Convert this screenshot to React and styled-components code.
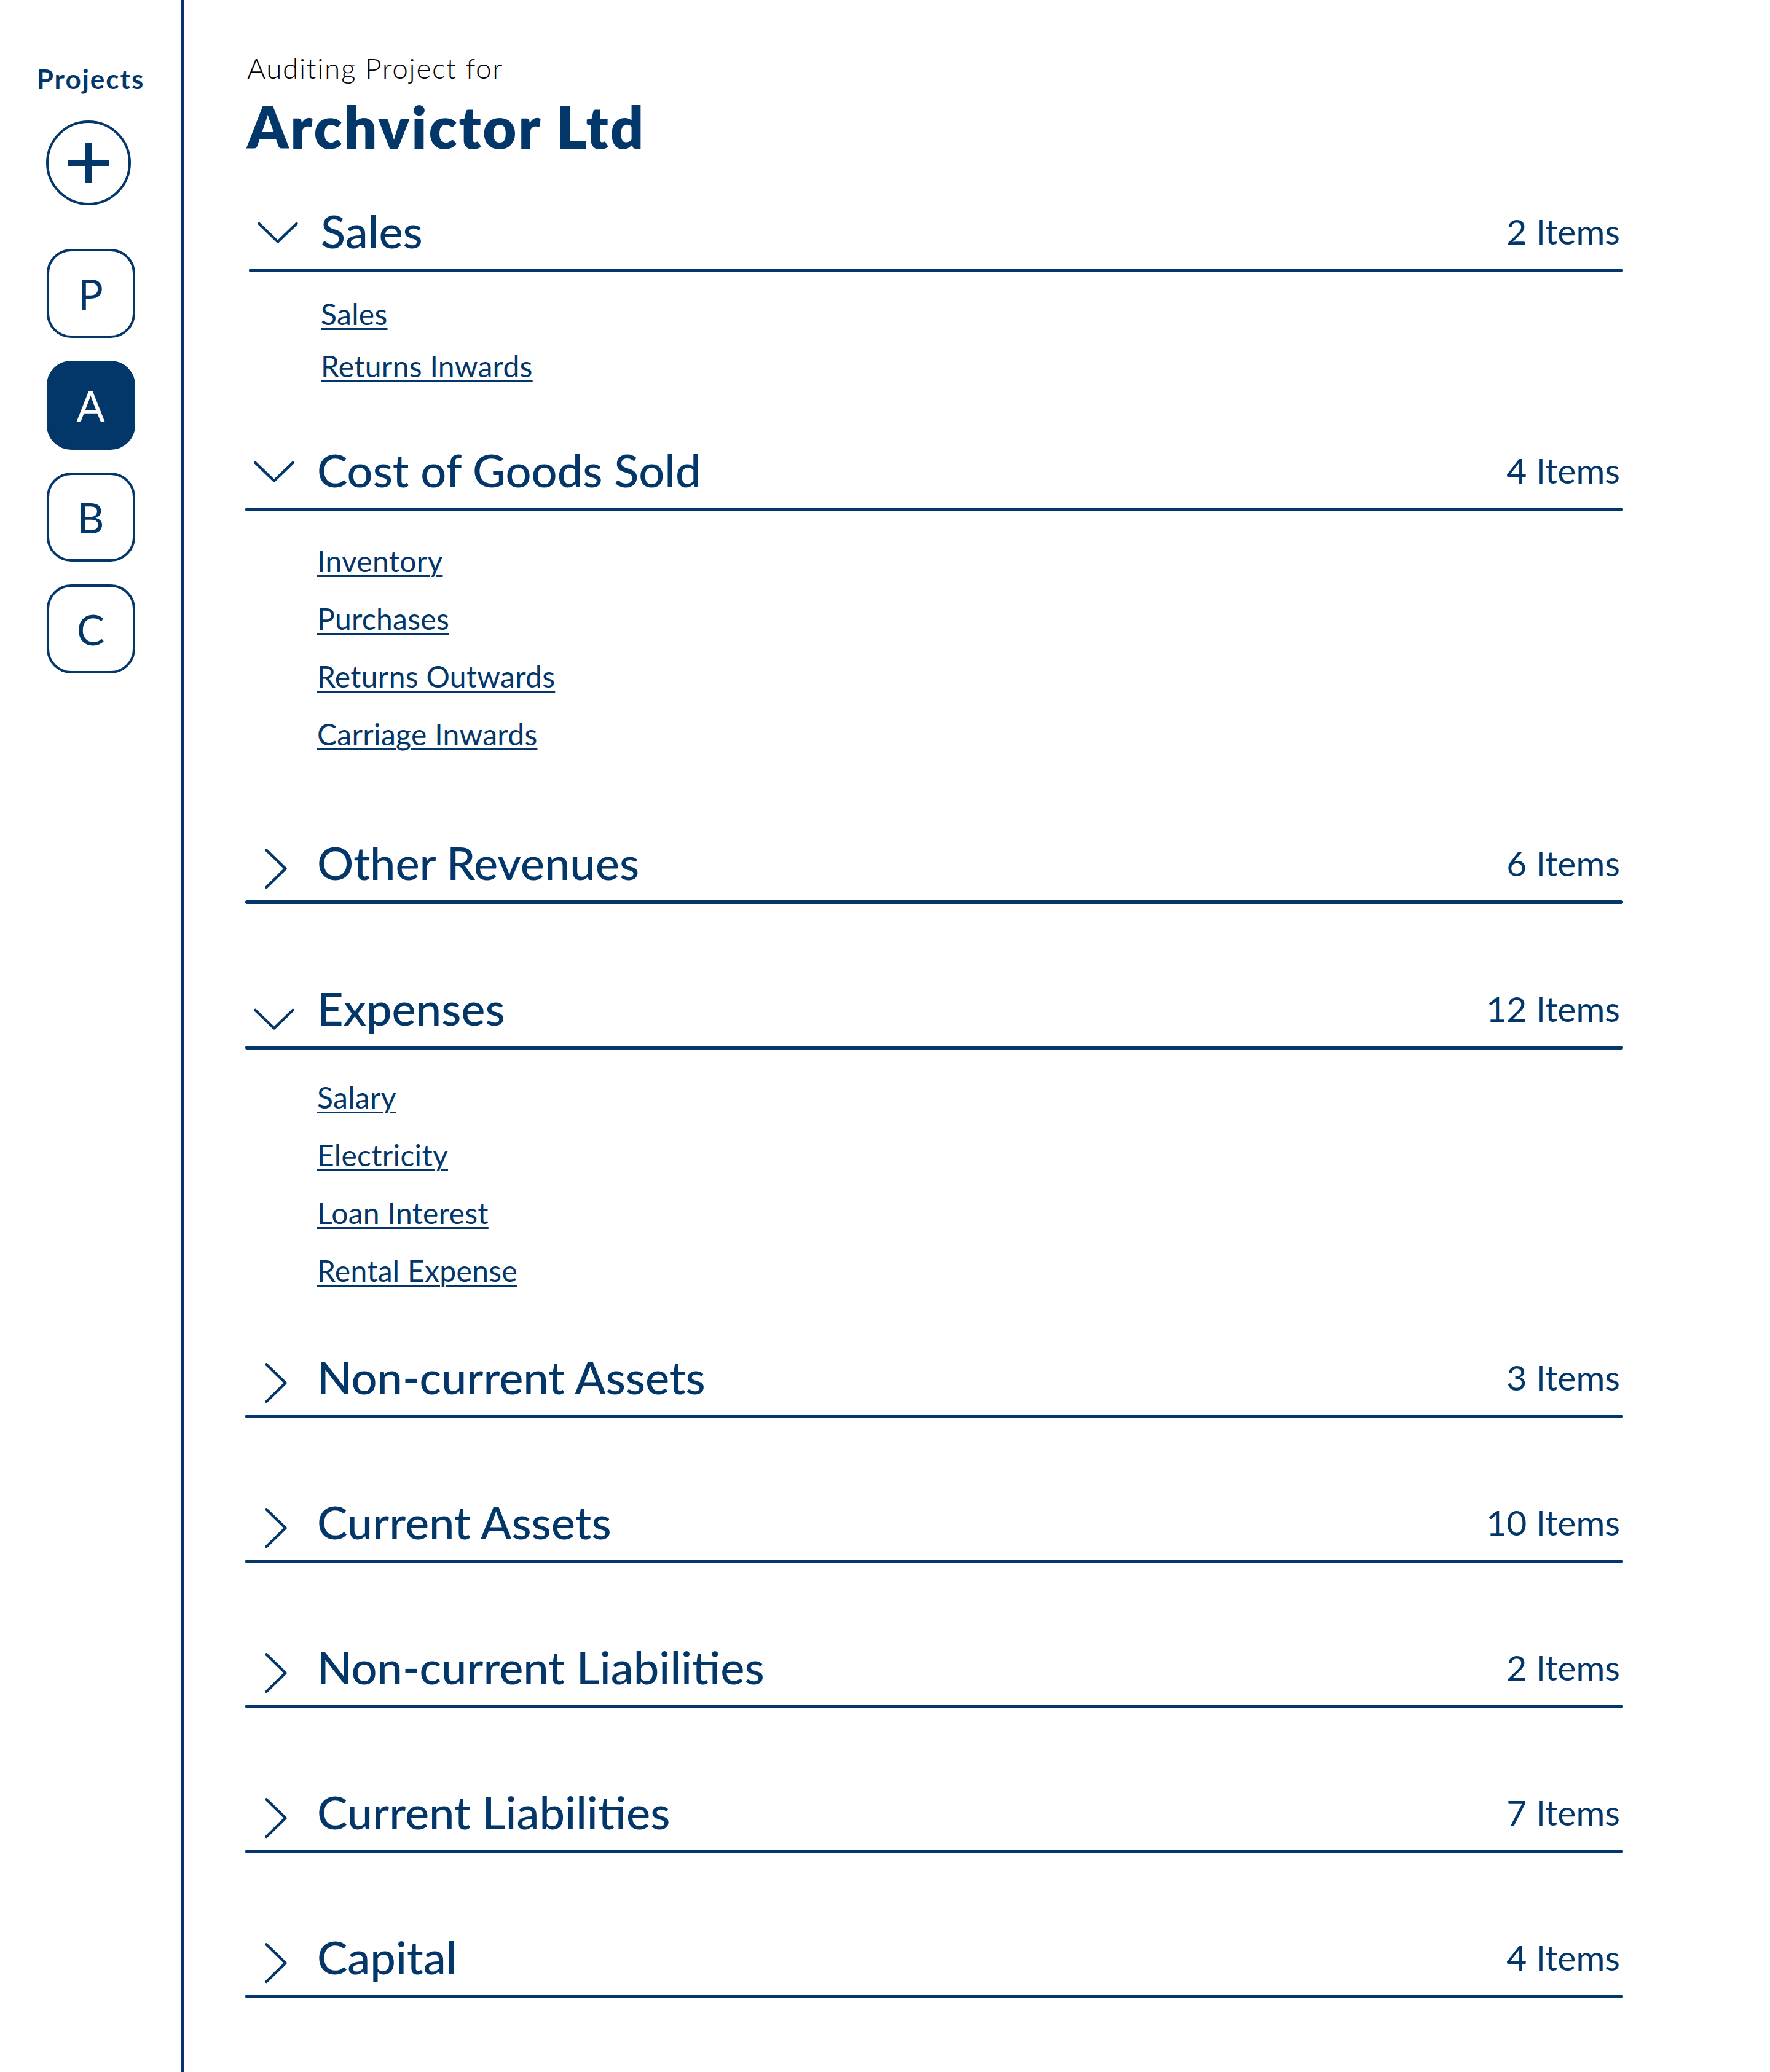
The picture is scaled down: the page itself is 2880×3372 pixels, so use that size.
import React from 'react';
import styled, { createGlobalStyle } from 'styled-components';

const navy = '#03376a';

const GlobalStyle = createGlobalStyle`
	* {
		box-sizing: border-box;
	}
	body {
		margin: 0;
		background: #fff;
		color: ${navy};
		font-family: Lato, "Noto Sans", "Liberation Sans", sans-serif;
	}
`;

const Page = styled.div`
	display: flex;
	min-height: 100vh;
`;

const Sidebar = styled.aside`
	flex-shrink: 0;
	width: 299px;
	border-right: 4px solid ${navy};
	display: flex;
	flex-direction: column;
	align-items: center;
	padding-top: 106px;
`;

const SidebarTitle = styled.h2`
	margin: 0 0 46px;
	font-size: 44px;
	line-height: 1;
	font-weight: 700;
	letter-spacing: 2px;
`;

const AddButton = styled.button`
	width: 138px;
	height: 138px;
	margin: 0 8px 71px 0;
	padding: 0;
	border: 4px solid ${navy};
	border-radius: 50%;
	background: #fff;
	display: flex;
	align-items: center;
	justify-content: center;
	color: ${navy};
`;

const ProjectList = styled.div`
	display: flex;
	flex-direction: column;
	gap: 37px;
`;

const ProjectButton = styled.button`
	width: 144px;
	height: 145px;
	padding: 0;
	border: 4px solid ${navy};
	border-radius: 40px;
	background: ${(p) => (p.$active ? navy : '#fff')};
	color: ${(p) => (p.$active ? '#fff' : navy)};
	font-family: inherit;
	font-size: 68px;
	line-height: 1;
	font-weight: 400;
	display: flex;
	align-items: center;
	justify-content: center;
`;

const Main = styled.main`
	flex: 1;
	padding: 88px 0 0 100px;
`;

const Content = styled.div`
	width: 2242px;
`;

const Kicker = styled.p`
	margin: 0 0 0 3px;
	color: #000;
	font-size: 46px;
	line-height: 1;
	font-weight: 300;
	letter-spacing: 1.6px;
`;

const Company = styled.h1`
	margin: 24px 0 78px 3px;
	font-size: 95px;
	line-height: 1;
	font-weight: 800;
	letter-spacing: 2.8px;
`;

const Section = styled.section`
	margin-left: ${(p) => p.$shift || 0}px;
	margin-bottom: ${(p) => p.$after}px;
`;

const HeaderRow = styled.div`
	display: flex;
	align-items: center;
	height: 90px;
`;

const ChevronBox = styled.div`
	flex-shrink: 0;
	width: 117px;
	padding-left: 13px;
	display: flex;
	align-items: center;
`;

const Title = styled.h3`
	flex: 1;
	margin: 0;
	font-size: 74px;
	line-height: 1;
	font-weight: 500;
`;

const Count = styled.span`
	margin-right: 5px;
	font-size: 57px;
	line-height: 1;
	font-weight: 400;
`;

const Rule = styled.div`
	height: 6px;
	margin-top: 16px;
	border-radius: 3px;
	background: ${navy};
`;

const ItemList = styled.ul`
	list-style: none;
	margin: ${(p) => p.$top}px 0 0;
	padding: 0 0 0 117px;
	display: flex;
	flex-direction: column;
	align-items: flex-start;
	gap: ${(p) => p.$gap}px;
`;

const ItemLink = styled.a`
	display: block;
	color: ${navy};
	font-size: 48px;
	line-height: 1;
	letter-spacing: 0.3px;
	text-decoration: underline;
	text-decoration-thickness: 3px;
	text-underline-offset: 5px;
`;

const Plus = () => (
	<svg width="66" height="66" viewBox="0 0 66 66">
		<rect x="28" y="0" width="10" height="66" fill={navy} />
		<rect x="0" y="28" width="66" height="10" fill={navy} />
	</svg>
);

const Chevron = ({ open, drop = 0 }) => (
	<svg width="70" height="90" viewBox="0 0 70 90">
		<path
			d={
				open
					? `M3.5 ${33 + drop} L34 ${62.5 + drop} L64.5 ${33 + drop}`
					: 'M21.5 24.5 L52.5 54.7 L21.5 85'
			}
			fill="none"
			stroke={navy}
			strokeWidth="4.5"
			strokeLinecap="round"
			strokeLinejoin="round"
		/>
	</svg>
);

const sections = [
	{ title: 'Sales', count: 2, shift: 6, top: 44, gap: 37, after: 100, items: ['Sales', 'Returns Inwards'] },
	{
		title: 'Cost of Goods Sold',
		count: 4,
		top: 57,
		gap: 46,
		after: 140,
		items: ['Inventory', 'Purchases', 'Returns Outwards', 'Carriage Inwards'],
	},
	{ title: 'Other Revenues', count: 6, after: 125 },
	{
		title: 'Expenses',
		count: 12,
		drop: 15,
		top: 54,
		gap: 46,
		after: 104,
		items: ['Salary', 'Electricity', 'Loan Interest', 'Rental Expense'],
	},
	{ title: 'Non-current Assets', count: 3, after: 124 },
	{ title: 'Current Assets', count: 10, after: 124 },
	{ title: 'Non-current Liabilities', count: 2, after: 124 },
	{ title: 'Current Liabilities', count: 7, after: 124 },
	{ title: 'Capital', count: 4, after: 124 },
];

const App = () => {
	return (
		<Page>
			<GlobalStyle />
			<Sidebar>
				<SidebarTitle>Projects</SidebarTitle>
				<AddButton aria-label="New project">
					<Plus />
				</AddButton>
				<ProjectList>
					<ProjectButton>P</ProjectButton>
					<ProjectButton $active>A</ProjectButton>
					<ProjectButton>B</ProjectButton>
					<ProjectButton>C</ProjectButton>
				</ProjectList>
			</Sidebar>
			<Main>
				<Content>
					<Kicker>Auditing Project for</Kicker>
					<Company>Archvictor Ltd</Company>
					{sections.map((s) => (
						<Section key={s.title} $shift={s.shift} $after={s.after}>
							<HeaderRow>
								<ChevronBox>
									<Chevron open={!!s.items} drop={s.drop} />
								</ChevronBox>
								<Title>{s.title}</Title>
								<Count>{s.count} Items</Count>
							</HeaderRow>
							<Rule />
							{s.items && (
								<ItemList $top={s.top} $gap={s.gap}>
									{s.items.map((item) => (
										<li key={item}>
											<ItemLink href="#">{item}</ItemLink>
										</li>
									))}
								</ItemList>
							)}
						</Section>
					))}
				</Content>
			</Main>
		</Page>
	);
};

export default App;
